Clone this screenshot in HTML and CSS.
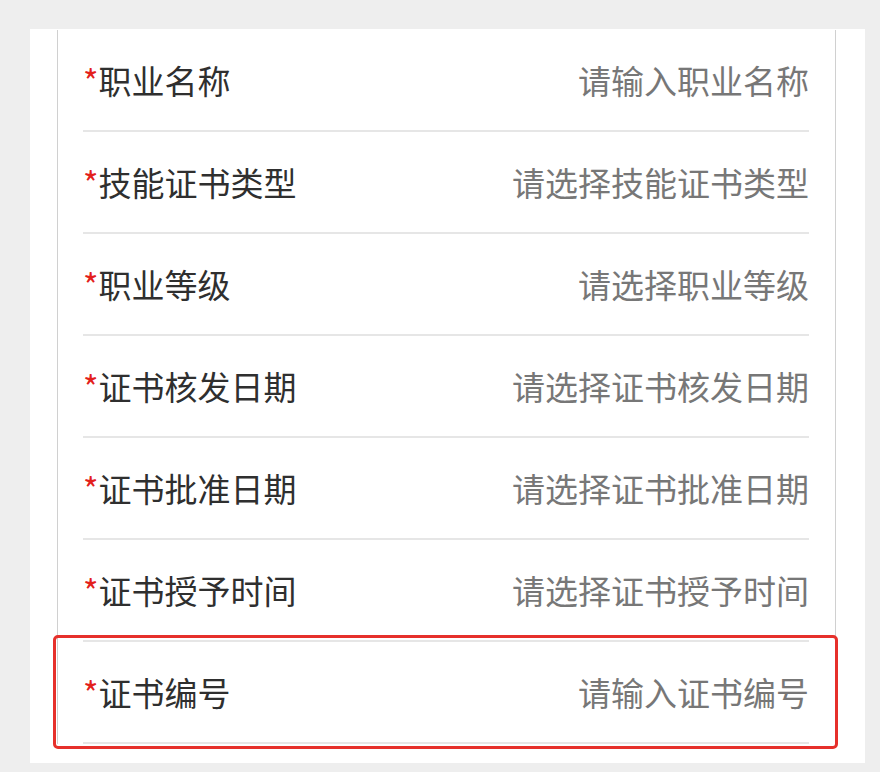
FILE: index.html
```html
<!DOCTYPE html>
<html lang="zh-CN">
<head>
    <meta charset="UTF-8">
    <meta name="viewport" content="width=device-width, initial-scale=1.0">
    <title>证书信息</title>
    <link rel="stylesheet" href="styles.css">
</head>
<body>
    <div class="page">
        <div class="card">
            <div class="list">
                <div class="row">
                    <span class="label"><i class="req">*</i>职业名称</span>
                    <span class="hint">请输入职业名称</span>
                </div>
                <div class="row">
                    <span class="label"><i class="req">*</i>技能证书类型</span>
                    <span class="hint">请选择技能证书类型</span>
                </div>
                <div class="row">
                    <span class="label"><i class="req">*</i>职业等级</span>
                    <span class="hint">请选择职业等级</span>
                </div>
                <div class="row">
                    <span class="label"><i class="req">*</i>证书核发日期</span>
                    <span class="hint">请选择证书核发日期</span>
                </div>
                <div class="row">
                    <span class="label"><i class="req">*</i>证书批准日期</span>
                    <span class="hint">请选择证书批准日期</span>
                </div>
                <div class="row">
                    <span class="label"><i class="req">*</i>证书授予时间</span>
                    <span class="hint">请选择证书授予时间</span>
                </div>
                <div class="row row-marked">
                    <span class="label"><i class="req">*</i>证书编号</span>
                    <span class="hint">请输入证书编号</span>
                </div>
            </div>
        </div>
    </div>
</body>
</html>
```

FILE: styles.css
```css
body {
    margin: 0;
    background-color: #eeeeee;
    font-family: "Noto Sans CJK SC", "Noto Sans", sans-serif;
}

.page {
    padding: 29px 15px 0 30px; /* card sits on the grey page */
}

.card {
    background: #ffffff;
    padding: 1px 29px 19px 27px;
}

/* thin grey rails on both sides of the form */
.list {
    border-left: 1px solid #d0d0d0;
    border-right: 1px solid #d0d0d0;
}

.row {
    position: relative;
    display: flex;
    justify-content: space-between;
    align-items: center;
    height: 100px;
    margin: 0 26px 0 25px;
    border-bottom: 2px solid #e6e6e6;
    font-size: 33px;
}

.label {
    color: #2f2f2f;
}

.req {
    font-style: normal;
    color: #e3201b;
}

.hint {
    color: #777777;
}

/* red annotation frame drawn over the last row */
.row-marked::after {
    content: "";
    position: absolute;
    top: -7px;
    bottom: -7px;
    left: -30px;
    right: -29px;
    border: 3px solid #e6302b;
    border-radius: 5px;
}
```
